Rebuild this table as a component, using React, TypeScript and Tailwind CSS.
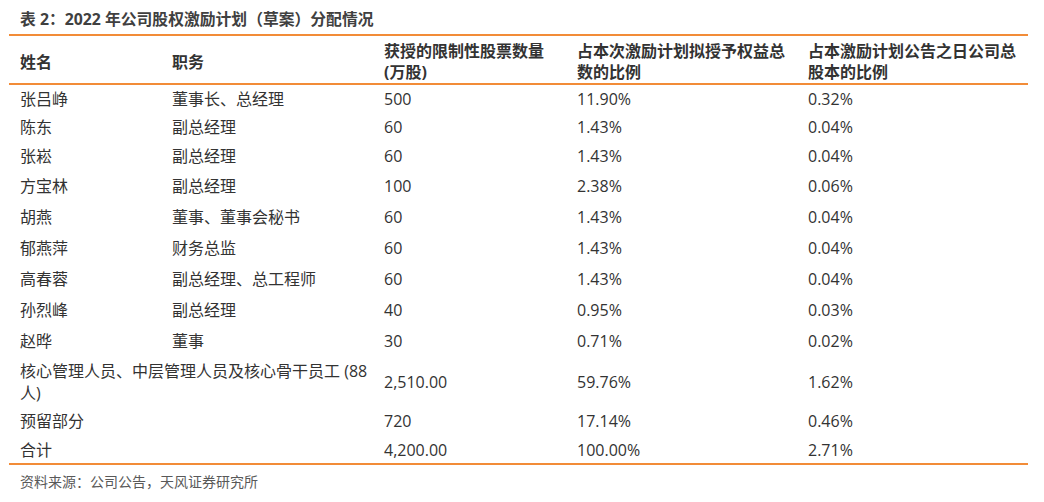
const rows = [
  { name: '张吕峥', title: '董事长、总经理', shares: '500', pctGrant: '11.90%', pctTotal: '0.32%', h: 'h-[29px]' },
  { name: '陈东', title: '副总经理', shares: '60', pctGrant: '1.43%', pctTotal: '0.04%', h: 'h-[29px]' },
  { name: '张崧', title: '副总经理', shares: '60', pctGrant: '1.43%', pctTotal: '0.04%', h: 'h-[29px]' },
  { name: '方宝林', title: '副总经理', shares: '100', pctGrant: '2.38%', pctTotal: '0.06%', h: 'h-[31px]' },
  { name: '胡燕', title: '董事、董事会秘书', shares: '60', pctGrant: '1.43%', pctTotal: '0.04%', h: 'h-[31px]' },
  { name: '郁燕萍', title: '财务总监', shares: '60', pctGrant: '1.43%', pctTotal: '0.04%', h: 'h-[31px]' },
  { name: '高春蓉', title: '副总经理、总工程师', shares: '60', pctGrant: '1.43%', pctTotal: '0.04%', h: 'h-[31px]' },
  { name: '孙烈峰', title: '副总经理', shares: '40', pctGrant: '0.95%', pctTotal: '0.03%', h: 'h-[31px]' },
  { name: '赵晔', title: '董事', shares: '30', pctGrant: '0.71%', pctTotal: '0.02%', h: 'h-[31px]' },
];

const cell = 'pl-[11px] pr-1 align-middle';
const head = 'pl-[11px] pr-0 pt-[5px] align-middle text-left whitespace-nowrap';

export default function App() {
  return (
    <div
      className="w-[1044px] h-[502px] bg-white text-[#333333]"
      style={{ fontFamily: '"Open Sans", "Noto Sans CJK SC", sans-serif' }}
    >
      <div className="pl-[9px]">
        <h1 className="pt-[9px] pl-[11px] text-[15.8px] leading-[20px] font-bold text-[#404040]">
          表 2：2022 年公司股权激励计划（草案）分配情况
        </h1>

        <table className="mt-[5px] w-[1019px] table-fixed border-collapse text-[16px]">
          <colgroup>
            <col className="w-[152px]" />
            <col className="w-[212px]" />
            <col className="w-[193px]" />
            <col className="w-[231px]" />
            <col className="w-[231px]" />
          </colgroup>
          <thead>
            <tr className="h-[49px] border-y-2 border-[#F28C38] font-bold leading-[21px]">
              <th className={head}>姓名</th>
              <th className={head}>职务</th>
              <th className={head}>
                获授的限制性股票数量
                <br />
                (万股)
              </th>
              <th className={head}>
                占本次激励计划拟授予权益总
                <br />
                数的比例
              </th>
              <th className={head}>
                占本激励计划公告之日公司总
                <br />
                股本的比例
              </th>
            </tr>
          </thead>
          <tbody className="leading-[21px]">
            {rows.map((r) => (
              <tr key={r.name} className={r.h}>
                <td className={cell}>{r.name}</td>
                <td className={cell}>{r.title}</td>
                <td className={cell}>{r.shares}</td>
                <td className={cell}>{r.pctGrant}</td>
                <td className={cell}>{r.pctTotal}</td>
              </tr>
            ))}
            <tr className="h-[50px]">
              <td className={`${cell} leading-[22px] whitespace-nowrap`} colSpan={2}>
                核心管理人员、中层管理人员及核心骨干员工 (88
                <br />
                人)
              </td>
              <td className={cell}>2,510.00</td>
              <td className={cell}>59.76%</td>
              <td className={cell}>1.62%</td>
            </tr>
            <tr className="h-[28px]">
              <td className={cell}>预留部分</td>
              <td className={cell}></td>
              <td className={cell}>720</td>
              <td className={cell}>17.14%</td>
              <td className={cell}>0.46%</td>
            </tr>
            <tr className="h-[29px] border-b-2 border-[#F28C38]">
              <td className={`${cell} pt-[2px]`}>合计</td>
              <td className={cell}></td>
              <td className={`${cell} pt-[2px]`}>4,200.00</td>
              <td className={`${cell} pt-[2px]`}>100.00%</td>
              <td className={`${cell} pt-[2px]`}>2.71%</td>
            </tr>
          </tbody>
        </table>

        <p className="mt-[7px] pl-[11px] text-[14px] leading-[20px] text-[#595959]">
          资料来源：公司公告，天风证券研究所
        </p>
      </div>
    </div>
  );
}
